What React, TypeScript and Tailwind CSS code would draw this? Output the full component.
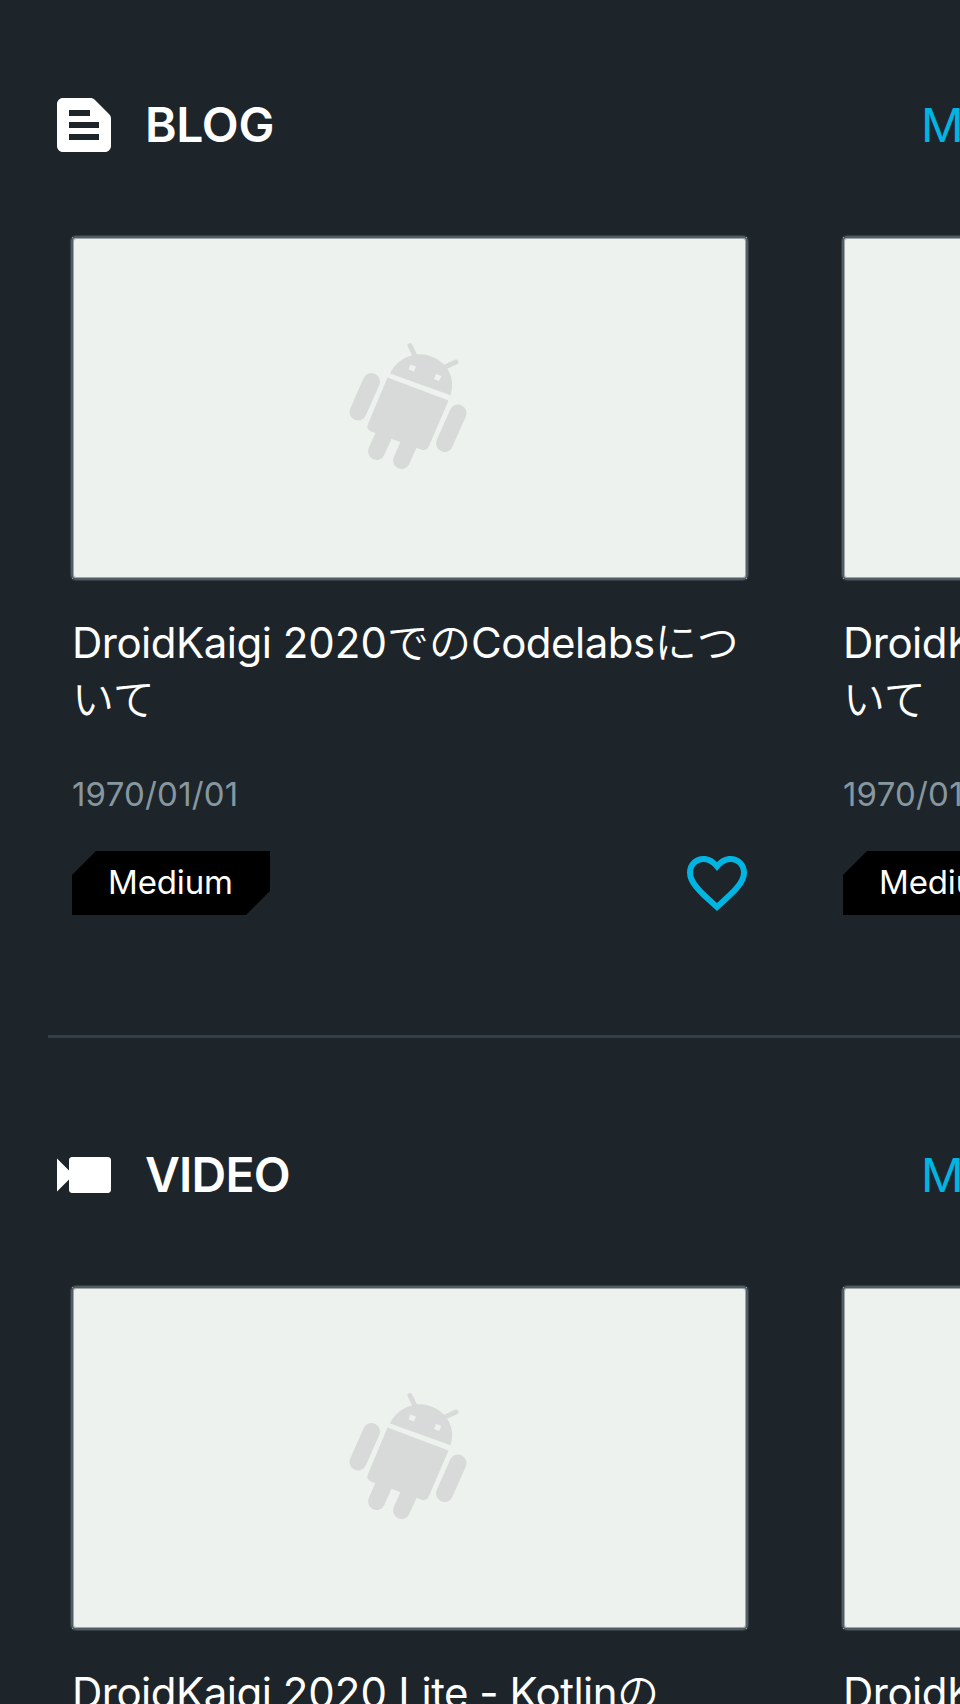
import React from "react";

function DocIcon() {
  return (
    <svg viewBox="0 0 24 24" className="h-18 w-18 shrink-0" fill="#fff" fillRule="evenodd">
      <path d="M20.41 8.41l-4.83-4.83c-.37-.37-.88-.58-1.41-.58H5c-1.1 0-2 .9-2 2v14c0 1.1.9 2 2 2h14c1.1 0 2-.9 2-2V9.83c0-.53-.21-1.04-.59-1.42zM7 7h7v2H7V7zm10 10H7v-2h10v2zm0-4H7v-2h10v2z" />
    </svg>
  );
}

function VideoIcon() {
  return (
    <svg viewBox="0 0 24 24" className="h-18 w-18 shrink-0" fill="#fff">
      <path d="M7 10.5V7c0-.55.45-1 1-1h12c.55 0 1 .45 1 1v10c0 .55-.45 1-1 1H8c-.55 0-1-.45-1-1v-3.5l-4 4v-11l4 4z" />
    </svg>
  );
}

function HeartIcon() {
  return (
    <svg viewBox="0 0 24 24" className="h-18 w-18 shrink-0" fill="#00b5e2">
      <path d="M16.5 3c-1.74 0-3.41.81-4.5 2.09C10.91 3.81 9.24 3 7.5 3 4.42 3 2 5.42 2 8.5c0 3.78 3.4 6.86 8.55 11.54L12 21.35l1.45-1.32C18.6 15.36 22 12.28 22 8.5 22 5.42 19.58 3 16.5 3zm-4.4 15.55l-.1.1-.1-.1C7.14 14.24 4 11.39 4 8.5 4 6.5 5.5 5 7.5 5c1.54 0 3.04.99 4.5 3.03C13.46 5.99 14.96 5 16.5 5c2 0 3.5 1.5 3.5 3.5 0 2.89-3.14 5.74-7.9 10.05z" />
    </svg>
  );
}

function Robot() {
  return (
    <svg viewBox="0 0 150 150" className="h-[150px] w-[150px]" fill="#d8dad9">
      <path d="M60 43.5C67 29 84 20.5 100 26C118 32 126 49 120.5 65.3Z" />
      <g stroke="#d8dad9" strokeLinecap="round" fill="none">
        <path d="M80 15.5L85 26M126 32L115 37" strokeWidth="5" />
        <path d="M41.5 51.5L28 82M128 83L114.5 113.5" strokeWidth="17" />
        <path d="M57 98L46.5 121.5M83 105L71.5 130.5" strokeWidth="17" />
      </g>
      <path d="M57.5 47.5L118.5 70.5L99 116Q96.5 121.5 91 119.5L41 101.5Q35.5 99 38 94Z" />
      <path d="M80.5 34.5L86 36.5L84 41.5L78.5 39.5ZM106 44L111.5 46L109 51L104 49Z" fill="#edf2ee" />
    </svg>
  );
}

function Card({ title }: { title: React.ReactNode }) {
  return (
    <article className="w-[675px] shrink-0">
      <div className="relative flex h-[342px] items-center justify-center bg-[#edf2ee] pr-[9px] pb-[6px]">
        <Robot />
        <div className="absolute -inset-px rounded-[5px] border-2 border-[#515d63] shadow-[0_0_0_1px_#515d6370,inset_0_0_0_1px_#515d6380]" />
      </div>
      <h3 className="mt-[35px] h-[114px] text-[42px] leading-[57px] whitespace-nowrap text-white">{title}</h3>
      <p className="mt-[46px] h-[40px] text-[33px] leading-[40px] tracking-[0.2px] text-[#87979f]">1970/01/01</p>
      <div className="mt-[33px] flex items-center justify-between">
        <span className="flex h-16 w-[198px] items-center bg-black pl-[36px] text-[33px] tracking-[-0.15px] text-white [clip-path:polygon(24px_0,100%_0,100%_40px,174px_100%,0_100%,0_24px)]">
          Medium
        </span>
        <div className="-mr-[6px]">
          <HeartIcon />
        </div>
      </div>
    </article>
  );
}

type SectionProps = { name: React.ReactNode; icon: React.ReactNode; title: React.ReactNode };

function Section({ name, icon, title }: SectionProps) {
  return (
    <section className="h-[1050px] w-[1600px] shrink-0">
      <header className="flex h-[72px] items-center pl-12">
        {icon}
        <h2 className="ml-[25px] w-[776px] text-[48px] leading-[72px] font-[560] text-white">{name}</h2>
        <a className="text-[47px] leading-[72px] font-normal text-[#00b5e2]">MORE</a>
      </header>
      <div className="mt-[76px] flex gap-24 pl-[72px]">
        <Card title={title} />
        <Card title={title} />
      </div>
      <div className="mt-[116px] ml-12 h-[3px] bg-[#324047]" />
    </section>
  );
}

const Latin = ({ children }: { children: React.ReactNode }) => <span className="tracking-[-0.5px]">{children}</span>;
const Kana = ({ children }: { children: React.ReactNode }) => (
  <span className="font-[350] tracking-[0px]">{children}</span>
);

export default function App() {
  return (
    <main className="flex h-[1704px] w-[960px] flex-col overflow-hidden bg-[#1d252b] pt-[89px] font-['Inter','Noto_Sans_CJK_JP',sans-serif]">
      <Section
        name={<span className="tracking-[-0.3px]">BLOG</span>}
        icon={<DocIcon />}
        title={
          <>
            <Latin>DroidKaigi </Latin>2020<Kana>での</Kana><Latin>Codelabs</Latin>
            <Kana>につ<br />いて</Kana>
          </>
        }
      />
      <Section
        name={<span className="tracking-[-0.8px]">VIDEO</span>}
        icon={<VideoIcon />}
        title={
          <>
            <Latin>DroidKaigi </Latin>2020<Latin> Lite - Kotlin</Latin>
            <Kana>の</Kana>
          </>
        }
      />
    </main>
  );
}
